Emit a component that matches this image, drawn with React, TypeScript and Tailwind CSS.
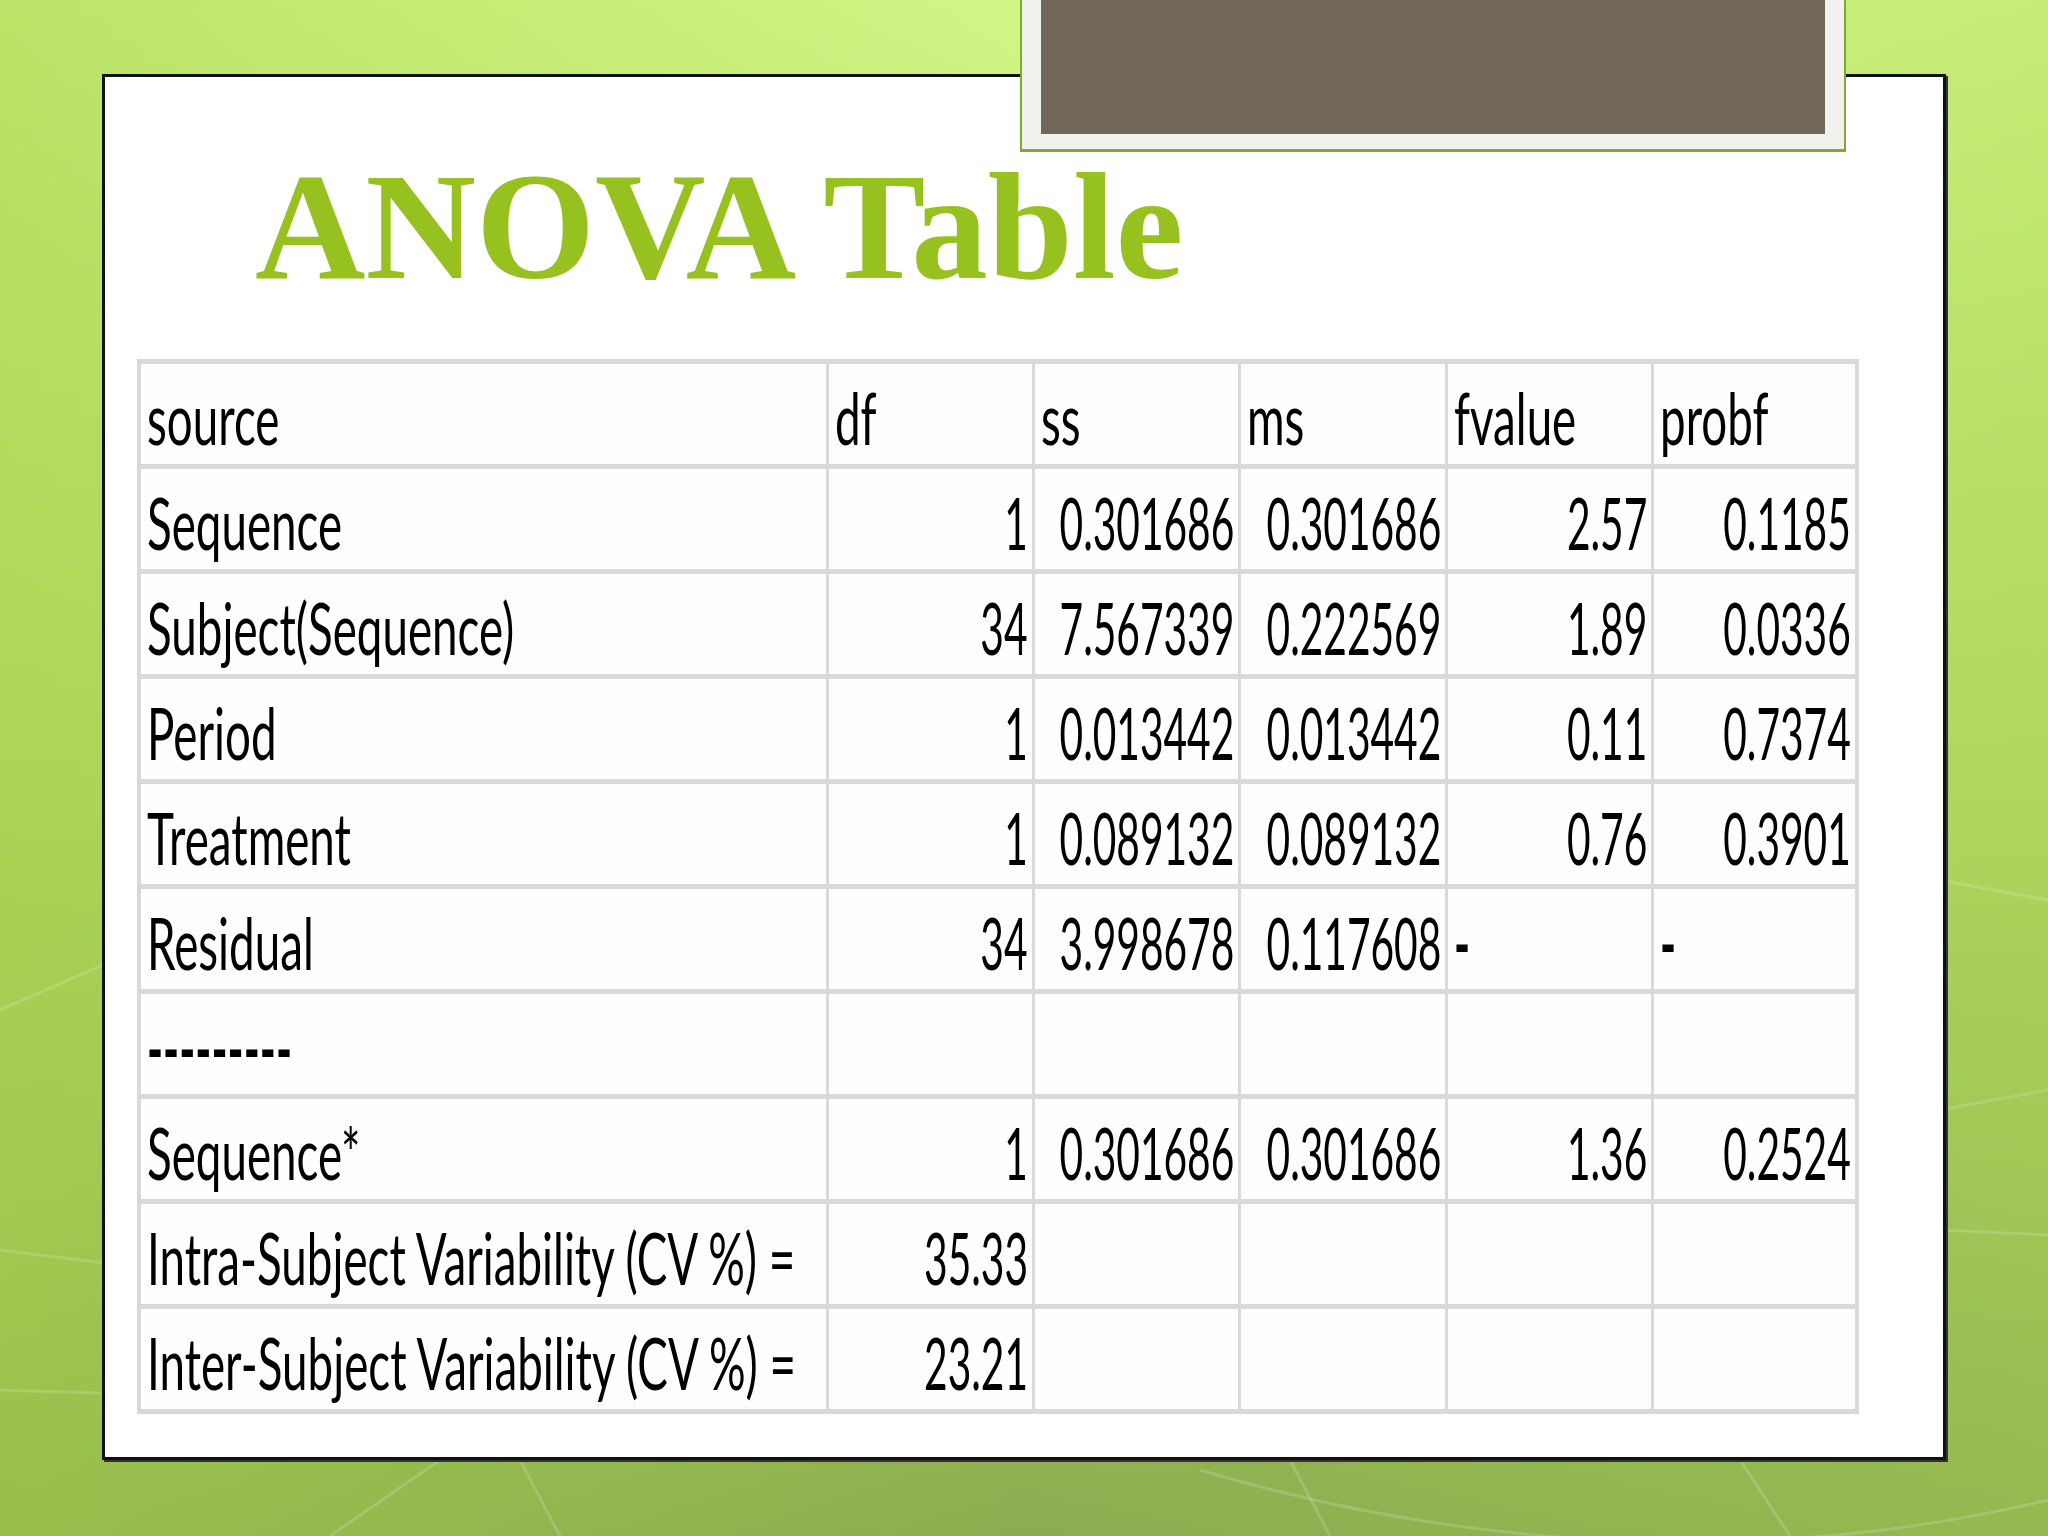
import React from 'react';

type Align = 'l' | 'r';
type C = { t: string; a: Align };

const L = (t: string): C => ({ t, a: 'l' });
const R = (t: string): C => ({ t, a: 'r' });

const rows: C[][] = [
  [L('source'), L('df'), L('ss'), L('ms'), L('fvalue'), L('probf')],
  [L('Sequence'), R('1'), R('0.301686'), R('0.301686'), R('2.57'), R('0.1185')],
  [L('Subject(Sequence)'), R('34'), R('7.567339'), R('0.222569'), R('1.89'), R('0.0336')],
  [L('Period'), R('1'), R('0.013442'), R('0.013442'), R('0.11'), R('0.7374')],
  [L('Treatment'), R('1'), R('0.089132'), R('0.089132'), R('0.76'), R('0.3901')],
  [L('Residual'), R('34'), R('3.998678'), R('0.117608'), L('-'), L('-')],
  [L('---------'), L(''), L(''), L(''), L(''), L('')],
  [L('Sequence*'), R('1'), R('0.301686'), R('0.301686'), R('1.36'), R('0.2524')],
  [L('Intra-Subject Variability (CV %) ='), R('35.33'), L(''), L(''), L(''), L('')],
  [L('Inter-Subject Variability (CV %) ='), R('23.21'), L(''), L(''), L(''), L('')],
];

function Cell({ c }: { c: C }) {
  const right = c.a === 'r';
  const numeric = /^[0-9.]+$/.test(c.t);
  const dashes = /^-+$/.test(c.t);
  let span: string;
  if (right) {
    span =
      'shrink-0 origin-right scale-x-[0.565] whitespace-nowrap font-[Lato,sans-serif] text-[72px] leading-none text-black';
  } else if (numeric) {
    span =
      'shrink-0 origin-left scale-x-[0.565] whitespace-nowrap font-[Lato,sans-serif] text-[72px] leading-none text-black';
  } else if (dashes) {
    span =
      'shrink-0 origin-left scale-x-[0.6] whitespace-nowrap font-[Lato,sans-serif] text-[72px] font-bold leading-none text-black';
  } else {
    span =
      'shrink-0 origin-left scale-x-[0.635] whitespace-nowrap font-[Lato,sans-serif] text-[72px] leading-none text-black';
  }
  return (
    <div
      className={
        right
          ? 'flex h-[100px] items-end justify-end bg-[#fefefe] pb-[11px] pr-[4px]'
          : 'flex h-[100px] items-end justify-start bg-[#fefefe] pb-[11px] pl-[6px]'
      }
    >
      {c.t !== '' && <span className={span}>{c.t}</span>}
    </div>
  );
}

export default function App() {
  return (
    <div className="relative h-[1536px] w-[2048px] overflow-hidden bg-gradient-to-b from-[#d2f687] via-[#b2d862] to-[#8dac50]">
      <div className="pointer-events-none absolute inset-0 bg-gradient-to-r from-[#a6d248]/50 via-transparent to-[#a9d650]/30" />
      <svg className="pointer-events-none absolute inset-0" width="2048" height="1536" viewBox="0 0 2048 1536">
        <g stroke="#ffffff" strokeOpacity="0.16" strokeWidth="3" fill="none">
          <path d="M0 1010 L160 940" />
          <path d="M0 1250 L160 1270" />
          <path d="M0 1390 L160 1395" />
          <path d="M1940 1110 L2048 1090" />
          <path d="M1940 1230 L2048 1235" />
          <path d="M1940 880 L2048 900" />
          <path d="M330 1536 L440 1460" />
          <path d="M560 1536 L520 1460" />
          <path d="M1200 1470 C1500 1560 1800 1560 2048 1500" />
          <path d="M1290 1460 L1330 1536" />
          <path d="M1740 1460 L1790 1536" />
        </g>
      </svg>

      <div className="relative ml-[102px] mt-[74px] h-[1386px] w-[1844px] border-[3px] border-[#111] bg-white shadow-[2px_2px_0_#333]">
        <div className="pl-[150px] pt-[73px]">
          <h1 className="w-fit font-['Liberation_Serif',serif] text-[153px] font-bold leading-none text-[#96c11f]">
            ANOVA Table
          </h1>
        </div>

        <div className="ml-[32px] mt-[56px] grid w-fit grid-cols-[685px_203px_203px_204px_203px_201px] gap-x-[3px] gap-y-[5px] bg-[#d9d9d9] px-[4px] py-[5px]">
          {rows.map((r, i) => r.map((c, j) => <Cell key={`${i}-${j}`} c={c} />))}
        </div>
      </div>

      <div className="absolute left-[1020px] top-0 h-[152px] w-[826px] border-x-2 border-b-[3px] border-[#80aa2c] bg-[#f1f2ee] px-[19px] pb-[15px]">
        <div className="h-full w-full bg-[#71675b]" />
      </div>
    </div>
  );
}
